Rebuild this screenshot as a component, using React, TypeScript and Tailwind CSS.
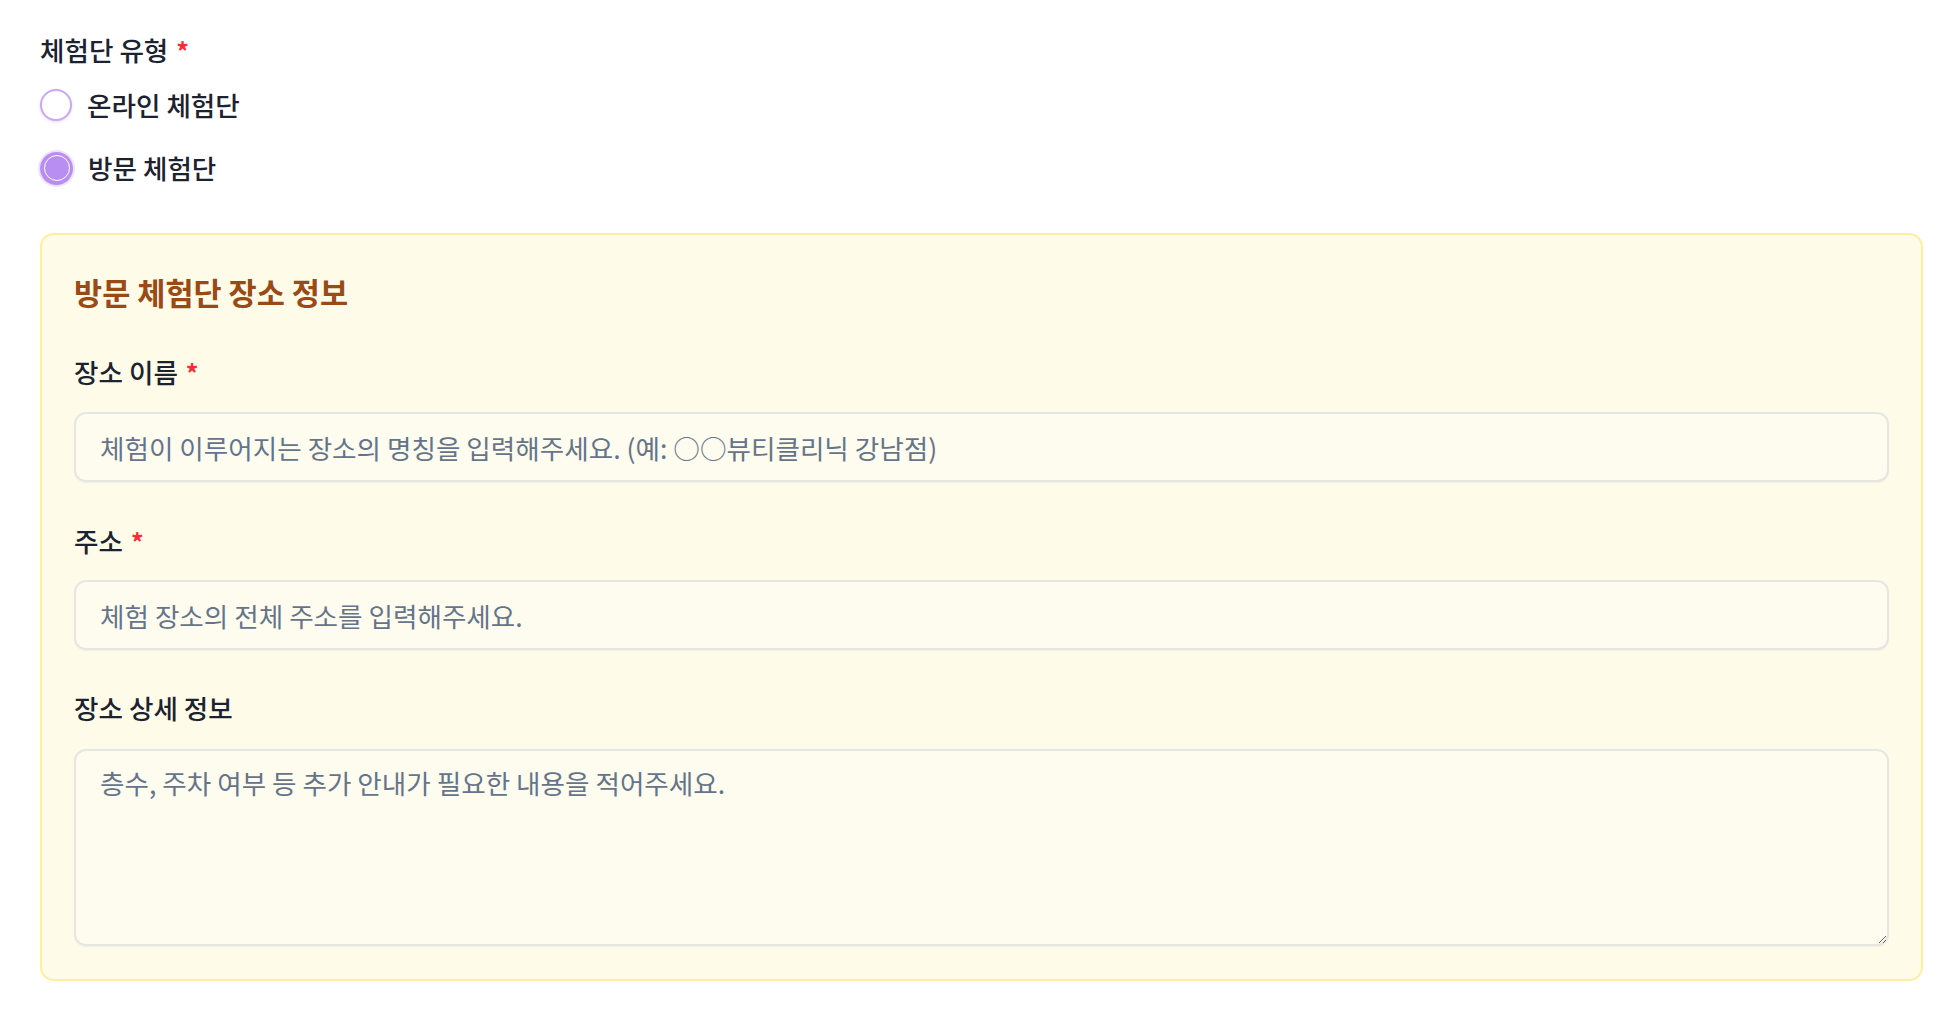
import { useState } from 'react';

const font = { fontFamily: '"Noto Sans CJK KR", "Noto Sans", sans-serif' };

const Required = () => <span className="ml-[8px] text-[25px] font-semibold leading-none text-red-500">*</span>;

const Radio = ({ checked, label, onClick }: { checked: boolean; label: string; onClick: () => void }) => (
  <button type="button" onClick={onClick} className="flex h-10 items-center gap-[15px] text-left">
    {checked ? (
      <span className="flex h-[33px] w-[33px] items-center justify-center rounded-full bg-[#b98ef2] shadow-[0_0_0_2px_rgba(185,142,242,0.25)]">
        <span className="h-[26px] w-[26px] rounded-full border-[1.5px] border-white bg-[#b98ef2]" />
      </span>
    ) : (
      <span className="h-[32px] w-[32px] rounded-full border-2 border-[#c9a8f5] bg-white shadow-[0_1px_3px_rgba(150,110,220,0.25)]" />
    )}
    <span className="text-[26.6px] font-medium leading-8 text-[#1c2230]">{label}</span>
  </button>
);

export default function App() {
  const [type, setType] = useState<'online' | 'visit'>('visit');

  return (
    <div style={font} className="min-h-screen bg-white pl-[40px] pr-[33px] pt-[34px]">
      <div className="flex items-center text-[26.6px] font-medium leading-8 text-[#1c2230]">
        체험단 유형
        <Required />
      </div>
      <div className="mt-[19px] flex flex-col gap-[23px]">
        <Radio checked={type === 'online'} label="온라인 체험단" onClick={() => setType('online')} />
        <Radio checked={type === 'visit'} label="방문 체험단" onClick={() => setType('visit')} />
      </div>

      {type === 'visit' && (
        <div className="mt-[45px] rounded-[14px] border-2 border-[#fdeea0] bg-[#fefce9] px-[32px] pb-[33px] pt-[39px]">
          <h2 className="text-[30.6px] font-semibold leading-9 text-[#9a4a14]">방문 체험단 장소 정보</h2>

          <label className="mt-[46px] flex items-center text-[26.6px] font-medium leading-8 text-[#1c2230]">
            장소 이름
            <Required />
          </label>
          <input
            placeholder="체험이 이루어지는 장소의 명칭을 입력해주세요. (예: ○○뷰티클리닉 강남점)"
            className="mt-[24px] h-[70px] w-full rounded-[12px] border-2 border-[#e6e6e3] bg-[#fdfcee] px-[24px] text-[26.6px] text-[#1c2230] shadow-[0_1px_2px_rgba(0,0,0,0.05)] placeholder:text-[#65748a] focus:outline-none"
          />

          <label className="mt-[43px] flex items-center text-[26.6px] font-medium leading-8 text-[#1c2230]">
            주소
            <Required />
          </label>
          <input
            placeholder="체험 장소의 전체 주소를 입력해주세요."
            className="mt-[23px] h-[70px] w-full rounded-[12px] border-2 border-[#e6e6e3] bg-[#fdfcee] px-[24px] text-[26.6px] text-[#1c2230] shadow-[0_1px_2px_rgba(0,0,0,0.05)] placeholder:text-[#65748a] focus:outline-none"
          />

          <label className="mt-[42px] block text-[26.6px] font-medium leading-8 text-[#1c2230]">장소 상세 정보</label>
          <textarea
            placeholder="층수, 주차 여부 등 추가 안내가 필요한 내용을 적어주세요."
            className="mt-[25px] block h-[197px] w-full rounded-[12px] border-2 border-[#e6e6e3] bg-[#fdfcee] px-[24px] py-[16px] text-[26.6px] leading-8 text-[#1c2230] shadow-[0_1px_2px_rgba(0,0,0,0.05)] placeholder:text-[#65748a] focus:outline-none"
          />
        </div>
      )}
    </div>
  );
}
